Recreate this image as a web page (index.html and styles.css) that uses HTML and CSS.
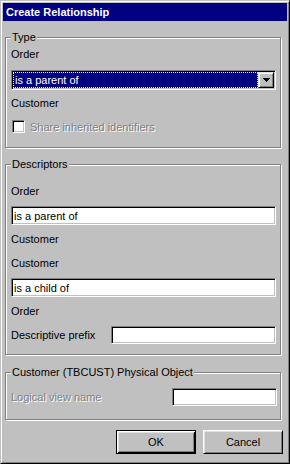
FILE: index.html
```html
<!DOCTYPE html>
<html lang="en">
<head>
    <meta charset="UTF-8">
    <meta name="viewport" content="width=device-width, initial-scale=1.0">
    <title>Create Relationship</title>
    <link rel="stylesheet" href="styles.css">
</head>
<body>
    <div class="window">
        <div class="titlebar">Create Relationship</div>

        <div class="content">
            <fieldset class="group group-type">
                <legend>Type</legend>
                <div class="label">Order</div>
                <div class="combo">
                    <div class="combo-value"><span>is a parent of</span></div>
                    <div class="combo-button">
                        <svg width="7" height="4" viewBox="0 0 7 4" shape-rendering="crispEdges">
                            <rect x="0" y="0" width="7" height="1" fill="#000"/>
                            <rect x="1" y="1" width="5" height="1" fill="#000"/>
                            <rect x="2" y="2" width="3" height="1" fill="#000"/>
                            <rect x="3" y="3" width="1" height="1" fill="#000"/>
                        </svg>
                    </div>
                </div>
                <div class="label label-customer">Customer</div>
                <div class="check">
                    <span class="check-box"></span>
                    <span class="disabled-text">Share inherited identifiers</span>
                </div>
            </fieldset>

            <fieldset class="group group-desc">
                <legend>Descriptors</legend>
                <div class="row">Order</div>
                <div class="row row-field"><input class="field" type="text" value="is a parent of"></div>
                <div class="row">Customer</div>
                <div class="row">Customer</div>
                <div class="row row-field"><input class="field" type="text" value="is a child of"></div>
                <div class="row">Order</div>
                <div class="row row-split">
                    <span>Descriptive prefix</span>
                    <input class="field field-prefix" type="text" value="">
                </div>
            </fieldset>

            <fieldset class="group group-phys">
                <legend>Customer (TBCUST) Physical Object</legend>
                <div class="row-phys">
                    <span class="disabled-text">Logical view name</span>
                    <input class="field field-view" type="text" value="">
                </div>
            </fieldset>

            <div class="buttons">
                <button class="btn btn-default">OK</button>
                <button class="btn">Cancel</button>
            </div>
        </div>
    </div>
</body>
</html>
```

FILE: styles.css
```css
* {
    margin: 0;
    padding: 0;
    box-sizing: border-box;
}

body {
    font-family: "Liberation Sans", Arial, sans-serif;
    font-size: 11px;
    color: #000;
    background: #c0c0c0;
}

.window {
    width: 290px;
    height: 464px;
    padding: 2px;
    background: #c0c0c0;
    border: 1px solid;
    border-color: #c0c0c0 #000 #000 #c0c0c0;
    box-shadow: inset 1px 1px 0 #fff, inset -1px -1px 0 #808080;
}

.titlebar {
    height: 18px;
    line-height: 18px;
    padding-left: 3px;
    background: #000080;
    color: #fff;
    font-weight: bold;
}

.content {
    padding: 10px 6px 0 2px;
}

/* etched group boxes */
.group {
    min-width: 0;
    padding: 0 4px 0 5px;
    border: 1px solid #808080;
    box-shadow: 1px 1px 0 #fff, inset 1px 1px 0 #fff;
}

.group legend {
    padding: 0 1px;
    line-height: 13px;
    background: #c0c0c0;
}

.group-type {
    padding-bottom: 14px;
}

.group-desc {
    margin-top: 10px;
    padding-top: 8px;
    padding-bottom: 7px;
}

.group-phys {
    margin-top: 11px;
    padding-top: 9px;
    padding-bottom: 12px;
}

.label {
    line-height: 20px;
}

.label-customer {
    margin-top: 3px;
}

/* sunken controls */
.combo,
.field,
.check-box {
    border: 1px solid;
    border-color: #808080 #fff #fff #808080;
    box-shadow: inset 1px 1px 0 #000, inset -1px -1px 0 #c0c0c0;
}

.combo {
    display: flex;
    height: 20px;
    margin-top: 6px;
    padding: 1px;
    background: #fff;
}

.combo-value {
    flex: 1;
    padding-left: 1px;
    line-height: 14px;
    background: #000080;
    color: #fff;
    border: 1px dotted #ffff90;
}

.combo-button {
    width: 16px;
    height: 16px;
    display: flex;
    align-items: center;
    justify-content: center;
    background: #c0c0c0;
    border: 1px solid;
    border-color: #dfdfdf #000 #000 #dfdfdf;
    box-shadow: inset 1px 1px 0 #fff, inset -1px -1px 0 #808080;
}

.combo-button svg {
    display: block;
}

.check {
    display: flex;
    align-items: center;
    height: 13px;
    margin-top: 7px;
}

.check-box {
    width: 13px;
    height: 13px;
    margin-left: 1px;
    margin-right: 5px;
    background: #fff;
}

.disabled-text {
    color: #808080;
    text-shadow: 1px 1px 0 #fff;
}

.row {
    height: 24px;
    line-height: 24px;
}

.row-field {
    padding-top: 3px;
}

.field {
    display: block;
    width: 100%;
    height: 19px;
    padding: 0 2px;
    font: inherit;
    color: #000;
    background: #fff;
    outline: none;
}

.row-split {
    display: flex;
    align-items: center;
    justify-content: space-between;
}

.field-prefix {
    width: 165px;
    height: 18px;
}

.row-phys {
    display: flex;
    justify-content: space-between;
    height: 19px;
    line-height: 19px;
}

.field-view {
    width: 105px;
    height: 18px;
    margin-right: -1px;
}

.buttons {
    display: flex;
    justify-content: flex-end;
    gap: 7px;
    margin-top: 10px;
    margin-right: -2px;
}

.btn {
    width: 80px;
    height: 24px;
    font: inherit;
    color: #000;
    background: #c0c0c0;
    border: 1px solid;
    border-color: #fff #000 #000 #fff;
    box-shadow: inset 1px 1px 0 #dfdfdf, inset -1px -1px 0 #808080;
}

.btn-default {
    border-color: #000;
    box-shadow: inset 1px 1px 0 #fff, inset -1px -1px 0 #000, inset 2px 2px 0 #dfdfdf, inset -2px -2px 0 #808080;
}
```
